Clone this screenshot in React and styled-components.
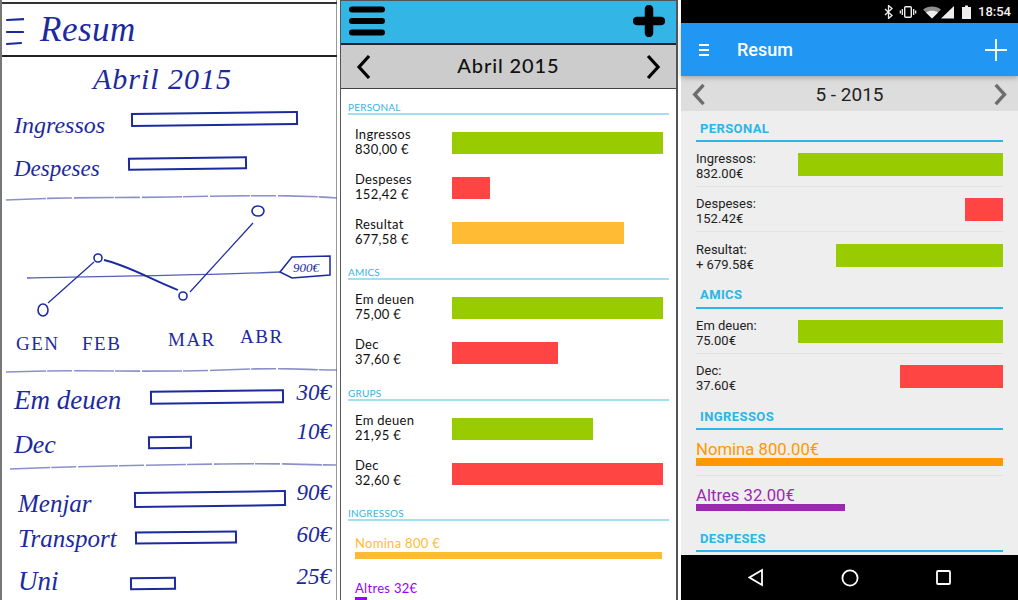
import React from "react";
import styled, { createGlobalStyle } from "styled-components";

const Global = createGlobalStyle`
  html, body { margin: 0; padding: 0; background: #fff; }
  #root { width: 1018px; height: 600px; overflow: hidden; }
`;

const Page = styled.div`
  display: flex;
  width: 1018px;
  height: 600px;
  overflow: hidden;
  background: #fff;
`;

/* ---------- sketch panel ---------- */
const ink = "#1c2a9e";

const SketchPanel = styled.section`
  width: 340px;
  height: 600px;
  flex: none;
  box-sizing: border-box;
  overflow: hidden;
  border-left: 2px solid #777;
  border-right: 3px solid #fff;
  box-shadow: inset -1px 0 0 #999;
  color: ${ink};
  font-family: "Liberation Serif", serif;
  font-style: italic;
`;
const SketchHeader = styled.header`
  height: 55px;
  box-sizing: border-box;
  display: flex;
  align-items: center;
  gap: 16px;
  padding: 0 0 0 2px;
  margin-top: 2px;
  border-top: 2px solid #333;
  border-bottom: 2px solid #222;
  font-size: 35px;
  letter-spacing: 0.5px;
`;
const SketchMonth = styled.h1`
  margin: 0;
  height: 44px;
  font-size: 30px;
  font-weight: 400;
  line-height: 44px;
  text-align: center;
  letter-spacing: 1px;
  padding-right: 14px;
  box-sizing: border-box;
`;
const SketchRow = styled.div`
  display: flex;
  align-items: center;
  height: ${(p) => p.$h}px;
  padding-left: ${(p) => p.$pad || 12}px;
`;
const SketchLabel = styled.span`
  width: ${(p) => p.$w}px;
  flex: none;
  font-size: ${(p) => p.$size}px;
  white-space: nowrap;
  transform: translateY(${(p) => p.$dy || 0}px);
`;
const SketchBar = styled.span`
  display: block;
  width: ${(p) => p.$w}px;
  height: ${(p) => p.$h || 12}px;
  flex: none;
  border: 2px solid ${ink};
  box-sizing: border-box;
  transform: translateY(${(p) => p.$dy || 0}px) rotate(-0.7deg);
`;
const SketchValue = styled.span`
  margin-left: auto;
  padding-right: 6px;
  font-size: 23px;
  transform: translateY(${(p) => p.$dy || 0}px);
`;
const SketchSvg = styled.svg`
  display: block;
  width: 338px;
  margin-top: ${(p) => p.$top || 0}px;
`;
const Months = styled.div`
  display: flex;
  height: 40px;
  box-sizing: border-box;
  padding: 0 0 8px 14px;
  font-size: 19px;
  letter-spacing: 1.5px;
  font-style: normal;
  align-items: center;
`;
const Month = styled.span`
  width: ${(p) => p.$w}px;
  flex: none;
  transform: translateY(${(p) => p.$dy || 0}px);
`;

const Scribble = ({ h = 10, d, top }) => (
  <SketchSvg height={h} $top={top} viewBox={`0 0 338 ${h}`}>
    <path d={d} fill="none" stroke="#5a62b0" strokeWidth="1.6" opacity="0.7" strokeDasharray="40 1 25 2" />
  </SketchSvg>
);

const SketchView = () => (
  <SketchPanel>
    <SketchHeader>
      <svg width="20" height="36" viewBox="0 0 20 36">
        <path d="M3 8 L21 7 M3 20 L19 20 M3 32 L17 31" stroke={ink} strokeWidth="2.2" strokeLinecap="round" />
      </svg>
      <span>Resum</span>
    </SketchHeader>
    <SketchMonth>Abril 2015</SketchMonth>
    <SketchRow $h={36}>
      <SketchLabel $w={117} $size={24} $dy={6}>Ingressos</SketchLabel>
      <SketchBar $w={167} $h={14} />
    </SketchRow>
    <SketchRow $h={53}>
      <SketchLabel $w={114} $size={23} $dy={5}>Despeses</SketchLabel>
      <SketchBar $w={119} $h={13} />
    </SketchRow>
    <Scribble top={5} d="M4 5 C60 2 110 3 170 2 S280 -1 336 3" />
    <SketchSvg height="123" viewBox="0 205 338 123">
      <g fill="none" stroke={ink}>
        <path d="M25 278 C100 276 190 276 278 272" strokeWidth="1.3" opacity="0.75" />
        <path d="M278 272 L290 257 L328 256 L328 275 L290 278 Z" strokeWidth="1.5" />
        <path d="M46 303 L92 262" strokeWidth="1.2" />
        <path d="M102 260 C125 265 150 280 176 290" strokeWidth="1.8" />
        <path d="M188 292 L251 223" strokeWidth="1.2" />
        <ellipse cx="41" cy="310" rx="5" ry="6" strokeWidth="1.6" />
        <circle cx="96" cy="258" r="4" strokeWidth="1.6" />
        <circle cx="181" cy="296" r="4" strokeWidth="1.6" />
        <ellipse cx="256" cy="211" rx="6" ry="5" strokeWidth="1.6" />
      </g>
      <text x="291" y="272" fontSize="13" fill={ink} fontStyle="italic">900€</text>
    </SketchSvg>
    <Months>
      <Month $w={66}>GEN</Month>
      <Month $w={86}>FEB</Month>
      <Month $w={72} $dy={-4}>MAR</Month>
      <Month $w={50} $dy={-7}>ABR</Month>
    </Months>
    <Scribble h={8} d="M4 4 C80 1 150 5 220 2 S300 2 336 2" />
    <SketchRow $h={45}>
      <SketchLabel $w={136} $size={27} $dy={2}>Em deuen</SketchLabel>
      <SketchBar $w={134} $h={14} $dy={-2} />
      <SketchValue $dy={-6}>30€</SketchValue>
    </SketchRow>
    <SketchRow $h={42}>
      <SketchLabel $w={134} $size={26} $dy={3}>Dec</SketchLabel>
      <SketchBar $w={44} $h={13} />
      <SketchValue $dy={-10}>10€</SketchValue>
    </SketchRow>
    <Scribble h={8} d="M8 6 C80 3 150 2 220 1 S300 2 334 2" />
    <SketchRow $h={46} $pad={16}>
      <SketchLabel $w={116} $size={25} $dy={10}>Menjar</SketchLabel>
      <SketchBar $w={152} $h={16} $dy={5} />
      <SketchValue $dy={-1}>90€</SketchValue>
    </SketchRow>
    <SketchRow $h={38} $pad={16}>
      <SketchLabel $w={117} $size={25} $dy={3}>Transport</SketchLabel>
      <SketchBar $w={102} $h={13} $dy={1} />
      <SketchValue $dy={-1}>60€</SketchValue>
    </SketchRow>
    <SketchRow $h={38} $pad={16}>
      <SketchLabel $w={112} $size={27} $dy={7}>Uni</SketchLabel>
      <SketchBar $w={46} $h={13} $dy={9} />
      <SketchValue $dy={3}>25€</SketchValue>
    </SketchRow>
  </SketchPanel>
);

/* ---------- wireframe panel ---------- */
const WirePanel = styled.section`
  width: 338px;
  height: 600px;
  flex: none;
  box-sizing: border-box;
  overflow: hidden;
  border: 1px solid #555;
  border-width: 1px 2px 0 1px;
  margin-right: 3px;
  font-family: Lato, "Open Sans", sans-serif;
  color: #111;
`;
const WireTop = styled.div`
  height: 44px;
  box-sizing: border-box;
  background: #33b5e5;
  border-bottom: 2px solid #222;
  display: flex;
  align-items: center;
  justify-content: space-between;
  padding: 0 11px 2px 8px;
`;
const WireDate = styled.div`
  height: 44px;
  box-sizing: border-box;
  background: #cccccc;
  border-bottom: 1.5px solid #444;
  display: flex;
  align-items: center;
  justify-content: space-between;
  padding: 0 15px;
  font-size: 20px;
  font-weight: 500;
  letter-spacing: 0.9px;
`;
const WireDateLabel = styled.span`
  padding-bottom: 3px;
`;
const WireBody = styled.div`
  padding: 12px 7px 0;
`;
const WireSection = styled.div`
  margin-bottom: ${(p) => p.$mb}px;
`;
const WireTitle = styled.div`
  font-size: 10px;
  line-height: 12px;
  color: #33b5e5;
  border-bottom: 2px solid #a3dff3;
  margin-bottom: 13px;
  letter-spacing: 0.2px;
`;
const WireRows = styled.div`
  display: flex;
  flex-direction: column;
  gap: ${(p) => p.$gap}px;
  padding-left: 7px;
  padding-right: 8px;
`;
const WireRow = styled.div`
  display: flex;
  align-items: center;
  height: 30px;
`;
const WireText = styled.div`
  width: 97px;
  flex: none;
  font-size: 13px;
  line-height: 15px;
  letter-spacing: 0.3px;
  padding-bottom: 2px;
`;
const Bar = styled.div`
  height: ${(p) => p.$h}px;
  width: ${(p) => p.$w}px;
  background: ${(p) => p.$color};
  flex: none;
  margin-left: ${(p) => (p.$end ? "auto" : 0)};
`;
const WireCategory = styled.div`
  color: ${(p) => p.$color};
  font-size: 13px;
  line-height: 15px;
  letter-spacing: 0.3px;
  padding: 2px 0 1px;
`;

const wireSections = [
  ["PERSONAL", 18, [["Ingressos", "830,00 €", 211, "#99cc00"], ["Despeses", "152,42 €", 38, "#ff4444"], ["Resultat", "677,58 €", 172, "#ffbb33"]]],
  ["AMICS", 19, [["Em deuen", "75,00 €", 211, "#99cc00"], ["Dec", "37,60 €", 106, "#ff4444"]]],
  ["GRUPS", 18, [["Em deuen", "21,95 €", 141, "#99cc00"], ["Dec", "32,60 €", 211, "#ff4444"]]],
];

const HamburgerWire = () => (
  <svg width="36" height="30" viewBox="0 0 36 30">
    <path d="M3 3.5H33M3 15H33M3 26.5H33" stroke="#000" strokeWidth="6" strokeLinecap="round" />
  </svg>
);
const PlusWire = () => (
  <svg width="32" height="32" viewBox="0 0 32 32">
    <path d="M16 4V28M4 16H28" stroke="#000" strokeWidth="8.5" strokeLinecap="round" />
  </svg>
);
const Chevron = ({ dir, color = "#000", w = 3.2, size = 26 }) => (
  <svg width={size * 0.62} height={size} viewBox="0 0 16 26">
    <path d={dir === "l" ? "M13 2L3 13L13 24" : "M3 2L13 13L3 24"} fill="none" stroke={color} strokeWidth={w} />
  </svg>
);

const WireView = () => (
  <WirePanel>
    <WireTop>
      <HamburgerWire />
      <PlusWire />
    </WireTop>
    <WireDate>
      <Chevron dir="l" />
      <WireDateLabel>Abril 2015</WireDateLabel>
      <Chevron dir="r" />
    </WireDate>
    <WireBody>
      {wireSections.map(([title, mb, rows]) => (
        <WireSection key={title} $mb={mb}>
          <WireTitle>{title}</WireTitle>
          <WireRows $gap={15}>
            {rows.map(([label, value, w, color]) => (
              <WireRow key={label}>
                <WireText>
                  {label}
                  <br />
                  {value}
                </WireText>
                <Bar $w={w} $h={22} $color={color} />
              </WireRow>
            ))}
          </WireRows>
        </WireSection>
      ))}
      <WireSection $mb={0}>
        <WireTitle>INGRESSOS</WireTitle>
        <WireRows $gap={20}>
          <div>
            <WireCategory $color="#ffbb33">Nomina 800 €</WireCategory>
            <Bar $w={307} $h={7} $color="#ffbb33" />
          </div>
          <div>
            <WireCategory $color="#9900ff">Altres 32€</WireCategory>
            <Bar $w={12} $h={7} $color="#9900ff" />
          </div>
        </WireRows>
      </WireSection>
    </WireBody>
  </WirePanel>
);

/* ---------- android panel ---------- */
const PhonePanel = styled.section`
  flex: 1;
  min-width: 0;
  height: 600px;
  display: flex;
  flex-direction: column;
  background: #eeeeee;
  font-family: Roboto, sans-serif;
  color: #222;
`;
const StatusBar = styled.div`
  height: 23px;
  flex: none;
  background: #000;
  color: #f2f2f2;
  display: flex;
  align-items: center;
  justify-content: flex-end;
  gap: 7px;
  padding-right: 7px;
  font-size: 13px;
  font-weight: 500;
`;
const StatusIcons = styled.svg`
  margin-right: 1px;
`;
const AppBar = styled.div`
  height: 53px;
  flex: none;
  background: #2196f3;
  color: #fff;
  display: flex;
  align-items: center;
  padding: 0 10px 0 18px;
  font-size: 18px;
  font-weight: 500;
  position: relative;
  z-index: 1;
  box-shadow: 0 2px 5px rgba(0, 0, 0, 0.25);
`;
const AppTitle = styled.span`
  margin-left: 28px;
  flex: 1;
`;
const DateBar = styled.div`
  height: 35px;
  flex: none;
  box-sizing: border-box;
  background: #dddddd;
  display: flex;
  align-items: center;
  justify-content: space-between;
  padding: 1px 11px 0;
  font-size: 19px;
`;
const PhoneBody = styled.div`
  flex: 1;
  min-height: 0;
  overflow: hidden;
  padding: 0 15px;
`;
const PhoneTitle = styled.div`
  font-size: 13px;
  font-weight: 700;
  line-height: 35px;
  height: ${(p) => p.$h}px;
  padding-left: 4px;
  color: #29b6e8;
  border-bottom: 2px solid #29b6e8;
  box-sizing: content-box;
  letter-spacing: 0.4px;
`;
const PhoneRow = styled.div`
  display: flex;
  align-items: center;
  height: 45px;
  padding-top: ${(p) => p.$shift || 0}px;
  border-bottom: 1px solid ${(p) => (p.$last ? "transparent" : "#e2e2e2")};
  box-sizing: border-box;
`;
const PhoneText = styled.div`
  font-size: 13px;
  line-height: 15px;
  white-space: nowrap;
  padding-top: 3px;
`;
const PhoneCategory = styled.div`
  padding-bottom: 9px;
  border-bottom: 1px solid ${(p) => (p.$last ? "transparent" : "#e2e2e2")};
`;
const PhoneCatLabel = styled.div`
  color: ${(p) => p.$color};
  font-size: 16.7px;
  line-height: 18px;
  padding-top: 11px;
  margin-bottom: -1px;
`;
const NavBar = styled.div`
  height: 45px;
  flex: none;
  background: #000;
  display: flex;
  align-items: center;
  padding: 0 67px;
  justify-content: space-between;
`;

const phonePersonal = [
  ["Ingressos:", "832.00€", 205, "#99cc00", 0],
  ["Despeses:", "152.42€", 38, "#ff4444", 0],
  ["Resultat:", "+ 679.58€", 167, "#99cc00", 3],
];
const phoneFriends = [
  ["Em deuen:", "75.00€", 205, "#99cc00", 0],
  ["Dec:", "37.60€", 103, "#ff4444", 0],
];

const PhoneRows = ({ rows }) =>
  rows.map(([label, value, w, color, shift], i) => (
    <PhoneRow key={label} $shift={shift} $last={i === rows.length - 1}>
      <PhoneText>
        {label}
        <br />
        {value}
      </PhoneText>
      <Bar $end $w={w} $h={23} $color={color} />
    </PhoneRow>
  ));

const PhoneView = () => (
  <PhonePanel>
    <StatusBar>
      <StatusIcons width="70" height="14" viewBox="0 0 70 14">
        <path d="M1 4L8 10.5L4.5 13.5V0.5L8 3.5L1 10" fill="none" stroke="#eee" strokeWidth="1.3" />
        <rect x="20.7" y="1.7" width="6.6" height="10.6" rx="1" fill="none" stroke="#eee" strokeWidth="1.4" />
        <path d="M18.3 4V10M29.7 4V10M16.3 5.5V8.5M31.7 5.5V8.5" stroke="#eee" strokeWidth="1.3" />
        <path d="M39 4.5C44 0.5 52 0.5 57 4.5L48 13.5Z" fill="#8e8e8e" />
        <path d="M42 7.5C45 5 51 5 54 7.5L48 13.5Z" fill="#eee" />
        <path d="M57 13.5L70 1V13.5Z" fill="#eee" />
      </StatusIcons>
      <svg width="9" height="14" viewBox="0 0 9 14">
        <path d="M0 2H3V0.5H6V2H9V14H0Z" fill="#eee" />
      </svg>
      <span>18:54</span>
    </StatusBar>
    <AppBar>
      <svg width="10" height="12" viewBox="0 0 10 12">
        <path d="M0 1H10M0 6H10M0 11H10" stroke="#fff" strokeWidth="2" />
      </svg>
      <AppTitle>Resum</AppTitle>
      <svg width="24" height="24" viewBox="0 0 24 24">
        <path d="M12 1V23M1 12H23" stroke="#fff" strokeWidth="1.8" />
      </svg>
    </AppBar>
    <DateBar>
      <Chevron dir="l" color="#6d6d6d" w={3.8} size={23} />
      <span>5 - 2015</span>
      <Chevron dir="r" color="#6d6d6d" w={3.8} size={23} />
    </DateBar>
    <PhoneBody>
      <PhoneTitle $h={29}>PERSONAL</PhoneTitle>
      <PhoneRows rows={phonePersonal} />
      <PhoneTitle $h={30}>AMICS</PhoneTitle>
      <PhoneRows rows={phoneFriends} />
      <PhoneTitle $h={29}>INGRESSOS</PhoneTitle>
      <PhoneCategory>
        <PhoneCatLabel $color="#ff9800">Nomina 800.00€</PhoneCatLabel>
        <Bar $w={307} $h={8} $color="#ff9800" />
      </PhoneCategory>
      <PhoneCategory $last>
        <PhoneCatLabel $color="#9c27b0">Altres 32.00€</PhoneCatLabel>
        <Bar $w={149} $h={7} $color="#9c27b0" />
      </PhoneCategory>
      <PhoneTitle $h={29}>DESPESES</PhoneTitle>
    </PhoneBody>
    <NavBar>
      <svg width="15" height="19" viewBox="0 0 15 19">
        <path d="M14 2V17L1.5 9.5Z" fill="none" stroke="#fff" strokeWidth="1.8" />
      </svg>
      <svg width="18" height="18" viewBox="0 0 18 18">
        <circle cx="9" cy="9" r="7.6" fill="none" stroke="#fff" strokeWidth="1.8" />
      </svg>
      <svg width="15" height="15" viewBox="0 0 15 15">
        <rect x="1" y="1" width="13" height="13" rx="1" fill="none" stroke="#fff" strokeWidth="1.8" />
      </svg>
    </NavBar>
  </PhonePanel>
);

export default function App() {
  return (
    <>
      <Global />
      <Page>
        <SketchView />
        <WireView />
        <PhoneView />
      </Page>
    </>
  );
}
